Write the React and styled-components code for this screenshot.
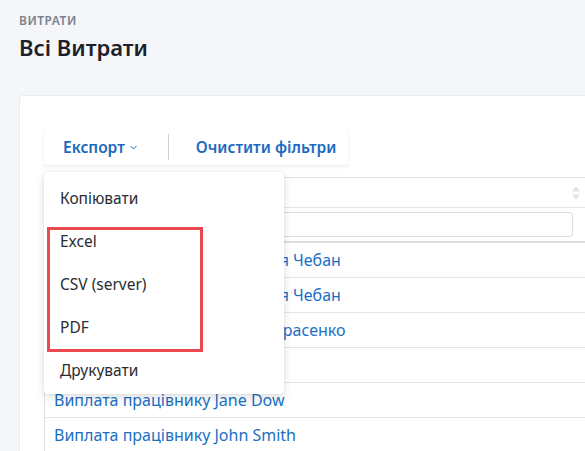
import React from 'react'
import styled, { createGlobalStyle } from 'styled-components'

const Global = createGlobalStyle`
    html, body {
        margin: 0;
        padding: 0;
        background: #f4f6f9;
        overflow: hidden;
    }
    * { box-sizing: border-box; }
`;

const Page = styled.div`
    padding: 13px 0 0 19px;
    font-family: "Noto Sans", "Open Sans", Arial, sans-serif;
    height: 451px;
    overflow: hidden;
`;

const Eyebrow = styled.div`
    font-size: 12px;
    line-height: 16px;
    font-weight: 600;
    letter-spacing: 0.5px;
    color: #7b818c;
`;

const Title = styled.h1`
    margin: 4px 0 0;
    font-size: 22px;
    line-height: 28px;
    font-weight: 600;
    color: #1d2127;
`;

const Card = styled.div`
    margin-top: 34px;
    width: 566px;
    background: #fff;
    border: 1px solid #e9ecf0;
    border-right: none;
    border-bottom: none;
    border-radius: 3px 0 0 0;
    padding: 32px 0 0 24px;
`;

const ToolbarWrap = styled.div`
    position: relative;
    display: inline-block;
`;

const Toolbar = styled.div`
    display: flex;
    align-items: center;
    height: 37px;
    padding-right: 12px;
    background: #fff;
    box-shadow: 0 2px 4px rgba(0,0,0,0.05), 0 1px 1px rgba(0,0,0,0.03);
    border-radius: 3px;
`;

const ToolButton = styled.div`
    display: flex;
    align-items: center;
    gap: 4px;
    padding: ${p => p.$first ? '0 30px 0 19px' : '0 0 0 27px'};
    font-size: 15.5px;
    font-weight: 600;
    color: #1a69c0;
    cursor: pointer;
`;

const Divider = styled.div`
    width: 1px;
    height: 26px;
    background: #cfd3d8;
`;

const Menu = styled.div`
    position: absolute;
    top: calc(100% + 7px);
    left: 0;
    width: 240px;
    padding: 4px 0 3px;
    background: #fff;
    border-radius: 4px;
    box-shadow: 0 3px 10px rgba(0,0,0,0.13), 0 0 2px rgba(0,0,0,0.08);
    z-index: 5;
`;

const MenuItem = styled.div`
    height: 43px;
    display: flex;
    align-items: center;
    padding-left: 16px;
    font-size: 15.5px;
    font-weight: 400;
    color: #2a2d32;
`;

const Highlight = styled.div`
    position: absolute;
    left: 3px;
    top: 55px;
    width: 156px;
    height: 125px;
    border: 3px solid #ea4a4f;
`;

const Table = styled.div`
    margin-top: 12px;
    width: 542px;
    border-left: 1px solid #dfe3e8;
    border-top: 1px solid #dfe3e8;
`;

const HeadRow = styled.div`
    height: 30px;
    display: flex;
    align-items: center;
    justify-content: flex-end;
    padding-right: 5px;
    border-bottom: 1px solid #e3e6ea;
`;

const FilterRow = styled.div`
    height: 35px;
    display: flex;
    align-items: center;
    padding: 0 13px 0 8px;
    border-bottom: 2px solid #dcdfe3;
`;

const FilterInput = styled.input`
    width: 100%;
    height: 25px;
    border: 1px solid #dadde2;
    border-radius: 3px;
    outline: none;
    background: #fff;
`;

const Row = styled.div`
    height: 35px;
    display: flex;
    align-items: center;
    padding-left: 9px;
    border-bottom: 1px solid #e3e6ea;
    font-size: 16px;
    color: #1a6fc4;
    white-space: nowrap;
    overflow: hidden;
`;

const SortIcon = () => (
  <svg width="10" height="16" viewBox="0 0 10 16">
    <path d="M5 1 L9 6.5 H1 Z" fill="#e1e4e8" />
    <path d="M5 15 L9 9.5 H1 Z" fill="#e1e4e8" />
  </svg>
)

const Chevron = () => (
  <svg width="9" height="9" viewBox="0 0 9 9" style={{ marginTop: 2 }}>
    <path d="M1.5 3 L4.5 6 L7.5 3" fill="none" stroke="#1a69c0" strokeWidth="1" />
  </svg>
)

const rows = [
  'Виплата працівнику Анастасія Чебан',
  'Виплата працівнику Анастасія Чебан',
  'Виплата працівнику Петро Тарасенко',
  'Оренда офісу',
  'Виплата працівнику Jane Dow',
  'Виплата працівнику John Smith',
]

const menu = ['Копіювати', 'Excel', 'CSV (server)', 'PDF', 'Друкувати']

export default function App() {
  return (
    <Page>
      <Global />
      <Eyebrow>ВИТРАТИ</Eyebrow>
      <Title>Всі Витрати</Title>
      <Card>
        <ToolbarWrap>
          <Toolbar>
            <ToolButton $first>Експорт <Chevron /></ToolButton>
            <Divider />
            <ToolButton>Очистити фільтри</ToolButton>
          </Toolbar>
          <Menu>
            {menu.map(m => <MenuItem key={m}>{m}</MenuItem>)}
            <Highlight />
          </Menu>
        </ToolbarWrap>
        <Table>
          <HeadRow><SortIcon /></HeadRow>
          <FilterRow><FilterInput type="text" /></FilterRow>
          {rows.map((r, i) => <Row key={i}>{r}</Row>)}
        </Table>
      </Card>
    </Page>
  )
}
